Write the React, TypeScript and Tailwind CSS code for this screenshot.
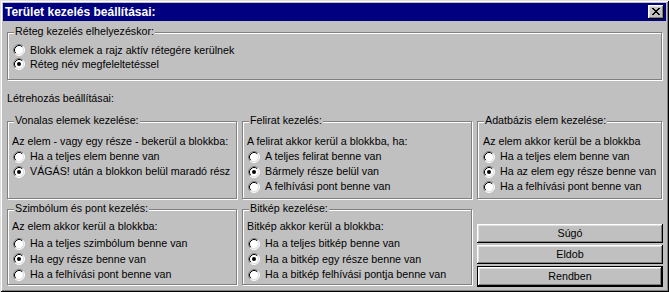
import React from "react";

function Radio({ checked }: { checked?: boolean }) {
  return (
    <svg width="12" height="12" viewBox="0 0 12 12" className="shrink-0">
      <circle cx="6" cy="6" r="5" fill="#fff" />
      <path d="M2.11 9.89A5.5 5.5 0 0 1 9.89 2.11" fill="none" stroke="#808080" />
      <path d="M9.89 2.11A5.5 5.5 0 0 1 2.11 9.89" fill="none" stroke="#fff" />
      <path d="M2.82 9.18A4.5 4.5 0 0 1 9.18 2.82" fill="none" stroke="#000" />
      <path d="M9.18 2.82A4.5 4.5 0 0 1 2.82 9.18" fill="none" stroke="#dfdfdf" />
      {checked && <circle cx="6" cy="6" r="2" fill="#000" />}
    </svg>
  );
}

function Option({ label, checked, h = "h-[15px]" }: { label: string; checked?: boolean; h?: string }) {
  return (
    <div className={`flex items-center gap-[5px] ${h}`}>
      <Radio checked={checked} />
      <span className="leading-[13px] whitespace-nowrap">{label}</span>
    </div>
  );
}

function GroupBox({ title, className, children }: { title: string; className: string; children: React.ReactNode }) {
  return (
    <div className={`relative border border-[#808080] shadow-[inset_1px_1px_0_#fff,1px_1px_0_#fff] ${className}`}>
      <span className="absolute -top-[8px] left-[6px] bg-[#c0c0c0] px-[1px] leading-[13px] whitespace-nowrap">{title}</span>
      {children}
    </div>
  );
}

function Button({ label, isDefault }: { label: string; isDefault?: boolean }) {
  const raised =
    "shadow-[inset_-1px_-1px_0_#000,inset_1px_1px_0_#fff,inset_-2px_-2px_0_#808080,inset_2px_2px_0_#dfdfdf]";
  if (isDefault) {
    return (
      <div className="h-[21px] w-full border border-black">
        <div className={`h-full flex items-center justify-center ${raised}`}>{label}</div>
      </div>
    );
  }
  return <div className={`h-[19px] w-full flex items-center justify-center ${raised}`}>{label}</div>;
}

function CloseButton() {
  return (
    <div className="w-[16px] h-[14px] bg-[#c0c0c0] shadow-[inset_-1px_-1px_0_#000,inset_1px_1px_0_#fff,inset_-2px_-2px_0_#808080,inset_2px_2px_0_#dfdfdf] pl-[4px] pt-[3px]">
      <svg width="8" height="7" viewBox="0 0 8 7" shapeRendering="crispEdges">
        <path
          d="M0 0h2v1H0zM6 0h2v1H6zM1 1h2v1H1zM5 1h2v1H5zM2 2h4v1H2zM3 3h2v1H3zM2 4h4v1H2zM1 5h2v1H1zM5 5h2v1H5zM0 6h2v1H0zM6 6h2v1H6z"
          fill="#000"
        />
      </svg>
    </div>
  );
}

export default function App() {
  return (
    <div className="w-[669px] h-[292px] bg-[#c0c0c0] p-[3px] shadow-[inset_1px_1px_0_#dfdfdf,inset_-1px_-1px_0_#000,inset_2px_2px_0_#fff,inset_-2px_-2px_0_#808080] font-['Liberation_Sans',Arial,sans-serif] text-[10.7px] text-black">
      <div className="h-[18px] bg-[#000080] flex items-center justify-between pl-[2px] pr-[2px]">
        <span className="text-white font-bold text-[12px] leading-[14px]">Terület kezelés beállításai:</span>
        <CloseButton />
      </div>

      <div className="pl-[4px]">
        <GroupBox title="Réteg kezelés elhelyezéskor:" className="mt-[11px] w-[655px] h-[48px] pt-[10px] pl-[5px]">
          <Option label="Blokk elemek a rajz aktív rétegére kerülnek" h="h-[14px]" />
          <Option label="Réteg név megfeleltetéssel" checked h="h-[14px]" />
        </GroupBox>

        <div className="mt-[12px] h-[13px] leading-[13px]">Létrehozás beállításai:</div>

        <div className="mt-[16px] flex gap-[5px]">
          <div className="flex flex-col gap-[10px]">
            <GroupBox title="Vonalas elemek kezelése:" className="w-[230px] h-[78px] pt-[13px] pl-[4px]">
              <div className="leading-[13px]">Az elem - vagy egy része - bekerül a blokkba:</div>
              <div className="mt-[1px] pl-[1px]">
                <Option label="Ha a teljes elem benne van" />
                <Option label="VÁGÁS! után a blokkon belül maradó rész" checked />
              </div>
            </GroupBox>
            <GroupBox title="Szimbólum és pont kezelés:" className="w-[230px] h-[76px] pt-[10px] pl-[4px]">
              <div className="leading-[13px]">Az elem akkor kerül a blokkba:</div>
              <div className="mt-[3px] pl-[1px]">
                <Option label="Ha a teljes szimbólum benne van" h="h-[15.5px]" />
                <Option label="Ha egy része benne van" checked h="h-[15.5px]" />
                <Option label="Ha a felhívási pont benne van" h="h-[15.5px]" />
              </div>
            </GroupBox>
          </div>

          <div className="flex flex-col gap-[10px]">
            <GroupBox title="Felirat kezelés:" className="w-[230px] h-[78px] pt-[13px] pl-[4px]">
              <div className="leading-[13px]">A felirat akkor kerül a blokkba, ha:</div>
              <div className="mt-[1px] pl-[1px]">
                <Option label="A teljes felirat benne van" />
                <Option label="Bármely része belül van" checked />
                <Option label="A felhívási pont benne van" />
              </div>
            </GroupBox>
            <GroupBox title="Bitkép kezelése:" className="w-[230px] h-[76px] pt-[10px] pl-[4px]">
              <div className="leading-[13px]">Bitkép akkor kerül a blokkba:</div>
              <div className="mt-[3px] pl-[1px]">
                <Option label="Ha a teljes bitkép benne van" h="h-[15.5px]" />
                <Option label="Ha a bitkép egy része benne van" checked h="h-[15.5px]" />
                <Option label="Ha a bitkép felhívási pontja benne van" h="h-[15.5px]" />
              </div>
            </GroupBox>
          </div>

          <div className="flex flex-col w-[186px]">
            <GroupBox title="Adatbázis elem kezelése:" className="w-[185px] h-[78px] pt-[13px] pl-[5px]">
              <div className="leading-[13px]">Az elem akkor kerül be a blokkba</div>
              <div className="mt-[1px]">
                <Option label="Ha a teljes elem benne van" />
                <Option label="Ha az elem egy része benne van" checked />
                <Option label="Ha a felhívási pont benne van" />
              </div>
            </GroupBox>
            <div className="mt-[25px] flex flex-col">
              <Button label="Súgó" />
              <div className="mt-[2px]">
                <Button label="Eldob" />
              </div>
              <div className="mt-[2px]">
                <Button label="Rendben" isDefault />
              </div>
            </div>
          </div>
        </div>
      </div>
    </div>
  );
}
